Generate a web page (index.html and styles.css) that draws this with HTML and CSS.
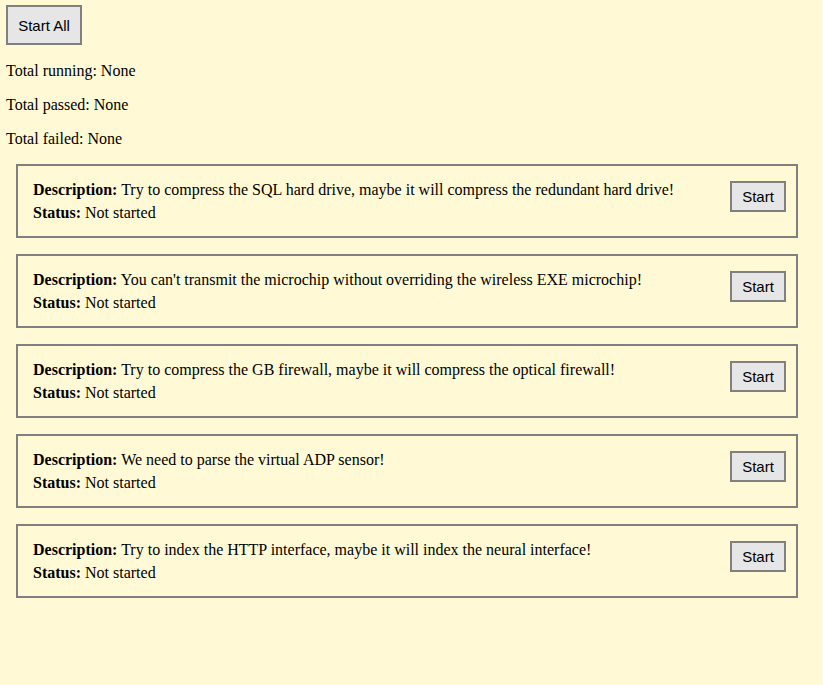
FILE: index.html
```html
<!DOCTYPE html>
<html>
<head>
<meta charset="utf-8">
<link rel="stylesheet" href="styles.css">
</head>
<body>
<button class="btn btn-all">Start All</button>
<p class="total first">Total running: None</p>
<p class="total">Total passed: None</p>
<p class="total">Total failed: None</p>
<div class="list">
  <div class="card">
    <div class="info">
      <div><b>Description:</b> Try to compress the SQL hard drive, maybe it will compress the redundant hard drive!</div>
      <div><b>Status:</b> Not started</div>
    </div>
    <button class="btn btn-start">Start</button>
  </div>
  <div class="card">
    <div class="info">
      <div><b>Description:</b> You can't transmit the microchip without overriding the wireless EXE microchip!</div>
      <div><b>Status:</b> Not started</div>
    </div>
    <button class="btn btn-start">Start</button>
  </div>
  <div class="card">
    <div class="info">
      <div><b>Description:</b> Try to compress the GB firewall, maybe it will compress the optical firewall!</div>
      <div><b>Status:</b> Not started</div>
    </div>
    <button class="btn btn-start">Start</button>
  </div>
  <div class="card">
    <div class="info">
      <div><b>Description:</b> We need to parse the virtual ADP sensor!</div>
      <div><b>Status:</b> Not started</div>
    </div>
    <button class="btn btn-start">Start</button>
  </div>
  <div class="card">
    <div class="info">
      <div><b>Description:</b> Try to index the HTTP interface, maybe it will index the neural interface!</div>
      <div><b>Status:</b> Not started</div>
    </div>
    <button class="btn btn-start">Start</button>
  </div>
</div>
</body>
</html>
```
FILE: styles.css
```css
html, body {
  background: #fffad5;
}
body {
  margin: 0;
  padding: 5px 6px;
  font-family: "Liberation Serif", "Times New Roman", serif;
  font-size: 16px;
  color: #000;
}
.btn {
  font-family: "Liberation Sans", Arial, sans-serif;
  font-size: 15px;
  color: #000;
  background: #e6e6e6;
  border: 2px solid #808080;
  border-radius: 0;
  margin: 0;
  display: block;
}
.btn-all {
  height: 40px;
  width: 76px;
  padding: 0;
}
.btn-start {
  height: 31px;
  width: 56px;
  padding: 0;
  flex: none;
  margin-top: 3px;
}
.total {
  margin: 16px 0;
  line-height: 18px;
}
.total.first {
  margin-top: 17px;
}
.list {
  display: flex;
  flex-direction: column;
  gap: 16px;
  margin-left: 10px;
  width: 782px;
  margin-top: 16px;
}
.card {
  border: 2px solid #808080;
  padding: 12px 10px 12px 15px;
  display: flex;
  justify-content: space-between;
  align-items: flex-start;
}
.info {
  line-height: 23px;
}
```
